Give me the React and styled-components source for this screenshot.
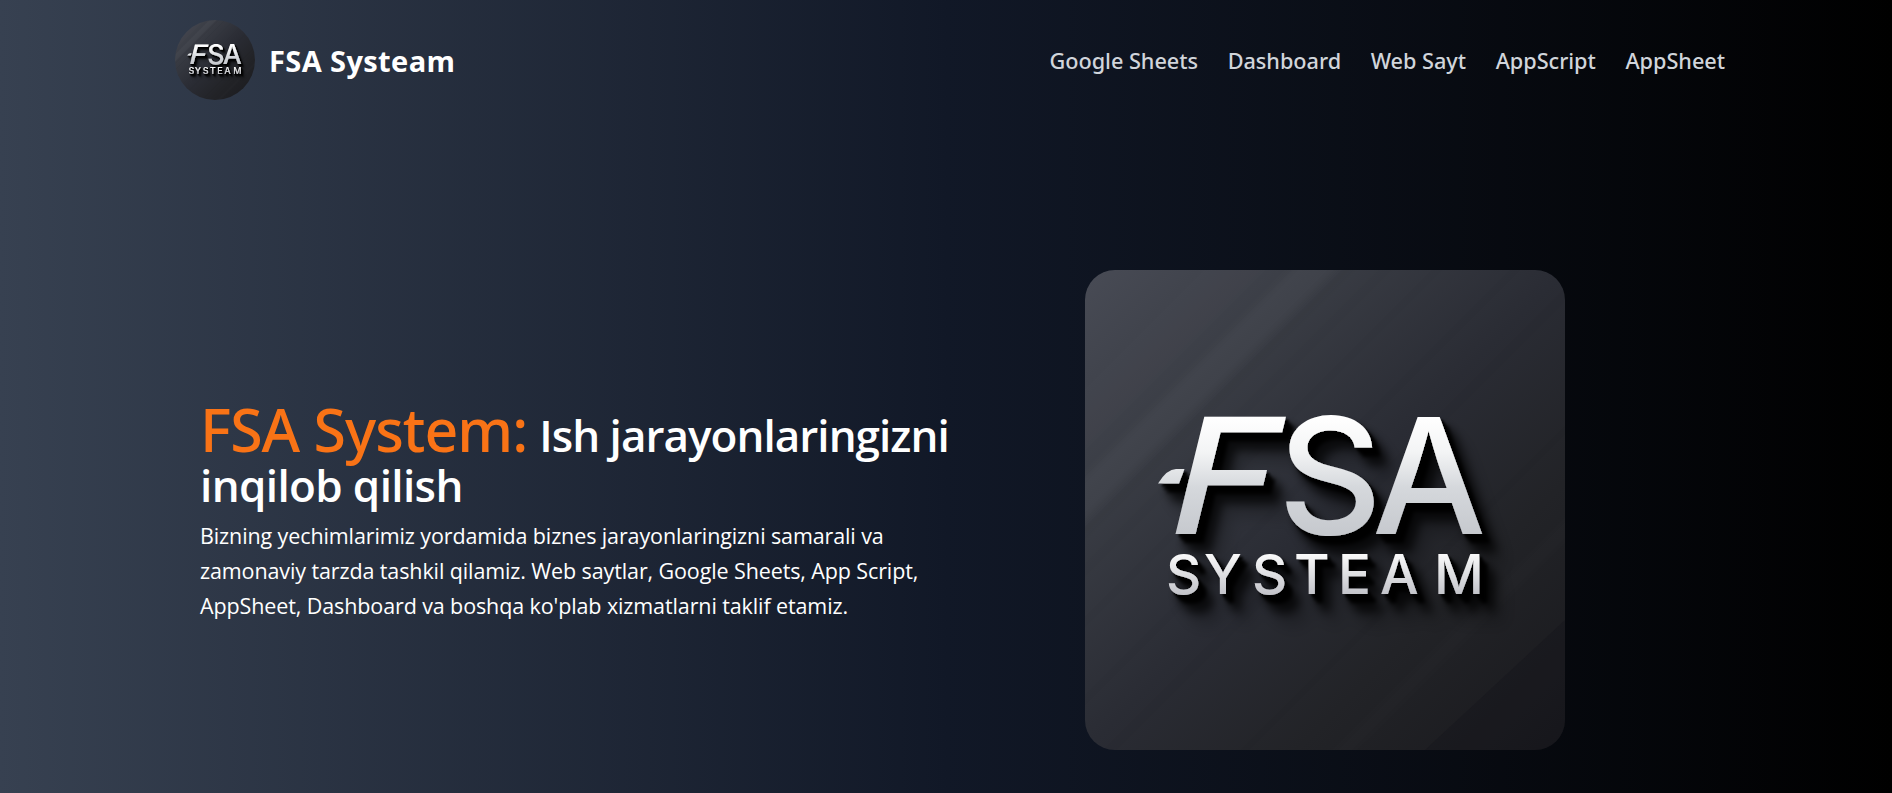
import React from 'react';
import styled, { createGlobalStyle } from 'styled-components';

const GlobalStyle = createGlobalStyle`
  *, *::before, *::after { box-sizing: border-box; }
  body { margin: 0; background: #000; }
`;

const Page = styled.div`
  min-height: 793px;
  height: 100vh;
  overflow: hidden;
  color: #fff;
  background: linear-gradient(to right, #374151, #111827, #000);
  font-family: 'Open Sans', 'Noto Sans', sans-serif;
`;

const Header = styled.header`
  height: 120px;
  padding: 0 167px 0 175px;
  display: flex;
  align-items: center;
  justify-content: space-between;
`;

const Brand = styled.a`
  display: flex;
  align-items: center;
  gap: 14px;
  color: #fff;
  font-size: 29px;
  font-weight: 700;
  letter-spacing: 0.4px;
  line-height: 40px;
`;

const BrandName = styled.span`
  padding-top: 2px;
`;

const Nav = styled.nav`
  display: flex;
  gap: 29.6px;
  padding-top: 2px;
`;

const NavLink = styled.a`
  color: #d1d5db;
  font: 500 21.7px/32px 'Noto Sans', sans-serif;
  letter-spacing: -0.03px;
`;

const Hero = styled.main`
  display: flex;
  align-items: center;
  padding: 150px 0 0 200px;
`;

const Copy = styled.section`
  width: 885px;
  padding-top: 6px;
`;

const Title = styled.h1`
  margin: 0 0 8px;
  font-size: 44px;
  font-weight: 600;
  line-height: 50px;
`;

const TitleLine = styled.span`
  display: flex;
  align-items: baseline;
  gap: 12px;
  white-space: nowrap;
  letter-spacing: ${({ $tracking }) => $tracking}px;
`;

const Accent = styled.span`
  color: #f97316;
  font: 500 59px/50px 'Noto Sans', sans-serif;
  letter-spacing: -1px;
`;

const Lead = styled.p`
  margin: 0;
  font-size: 21.5px;
  line-height: 35px;
  letter-spacing: -0.11px;
`;

const LeadLine = styled.span`
  display: block;
  white-space: nowrap;
`;

const LogoFrame = styled.svg`
  display: block;
  flex: none;
  width: ${({ $size }) => $size}px;
  height: ${({ $size }) => $size}px;
  border-radius: ${({ $radius }) => $radius};
`;

const Mark = styled.text`
  font: 500 161px Inter, sans-serif;
`;

const Caption = styled.text`
  font: 500 54.4px Inter, sans-serif;
`;

const streaks = [
  [150, 40, '#fff', 0.008],
  [228, 30, '#fff', 0.03],
  [262, 8, '#000', 0.03],
  [300, 6, '#000', 0.03],
  [352, 5, '#000', 0.03],
  [430, 5, '#000', 0.03],
  [505, 8, '#000', 0.03],
  [640, 6, '#000', 0.03],
  [740, 14, '#fff', 0.006],
];

function Logo({ id, size, radius }) {
  const ref = (name) => `url(#${id}-${name})`;
  return (
    <LogoFrame $size={size} $radius={radius} viewBox="0 0 480 480" role="img">
      <defs>
        <linearGradient id={`${id}-plate`} x1="0" y1="0" x2="1" y2="1">
          <stop offset="0" stopColor="#484b55" />
          <stop offset="0.24" stopColor="#3a3d45" />
          <stop offset="0.5" stopColor="#2a2c34" />
          <stop offset="0.72" stopColor="#222327" />
          <stop offset="1" stopColor="#19191d" />
        </linearGradient>
        <linearGradient id={`${id}-metal`} gradientUnits="userSpaceOnUse" x1="0" y1="147" x2="0" y2="265">
          <stop offset="0" stopColor="#fff" />
          <stop offset="0.3" stopColor="#f3f4f5" />
          <stop offset="0.6" stopColor="#d5d8dc" />
          <stop offset="1" stopColor="#c6c9ce" />
        </linearGradient>
        <linearGradient id={`${id}-letter`} gradientUnits="userSpaceOnUse" x1="0" y1="-117" x2="0" y2="0">
          <stop offset="0" stopColor="#fff" />
          <stop offset="0.3" stopColor="#f3f4f5" />
          <stop offset="0.6" stopColor="#d5d8dc" />
          <stop offset="1" stopColor="#c6c9ce" />
        </linearGradient>
        <linearGradient id={`${id}-caption`} gradientUnits="userSpaceOnUse" x1="0" y1="284" x2="0" y2="324">
          <stop offset="0" stopColor="#fafafa" />
          <stop offset="1" stopColor="#c3c4ca" />
        </linearGradient>
        <filter id={`${id}-soft`} filterUnits="userSpaceOnUse" x="0" y="0" width="480" height="480">
          <feGaussianBlur stdDeviation="3" />
        </filter>
        <filter id={`${id}-shade`} filterUnits="userSpaceOnUse" x="40" y="110" width="430" height="310">
          <feDropShadow dx="3" dy="3" stdDeviation="0.8" floodColor="#000" floodOpacity="1" />
          <feDropShadow dx="5" dy="6" stdDeviation="1.8" floodColor="#000" floodOpacity="1" />
          <feDropShadow dx="7" dy="9" stdDeviation="4" floodColor="#000" floodOpacity="0.7" />
          <feDropShadow dx="9" dy="13" stdDeviation="7" floodColor="#000" floodOpacity="0.3" />
        </filter>
      </defs>
      <rect width="480" height="480" fill={ref('plate')} />
      <g filter={ref('soft')}>
        {streaks.map(([at, width, colour, opacity]) => (
          <path
            key={at}
            d={`M${at + 20} -20L${at - 500} 500`}
            stroke={colour}
            strokeOpacity={opacity}
            strokeWidth={width}
          />
        ))}
      </g>
      <path d="M480 350V480H340Z" fill="#101016" fillOpacity="0.25" />
      <g filter={ref('shade')}>
        <path d="M73 213.500Q82 199 91 199H99.500L94 213.500Z" fill={ref('metal')} />
        <g fill={ref('letter')}>
          <Mark transform="translate(76 264) skewX(-13.8) scale(1.12 1)">F</Mark>
          <Mark transform="translate(193 264)">S</Mark>
          <Mark transform="translate(287 264)">A</Mark>
        </g>
        <Caption y="323.500" x="81 119 167 209 253 295 349" fill={ref('caption')}>SYSTEAM</Caption>
      </g>
    </LogoFrame>
  );
}

const links = ['Google Sheets', 'Dashboard', 'Web Sayt', 'AppScript', 'AppSheet'];

export default function App() {
  return (
    <>
      <GlobalStyle />
      <Page>
        <Header>
          <Brand>
            <Logo id="brand" size={80} radius="50%" />
            <BrandName>FSA Systeam</BrandName>
          </Brand>
          <Nav>
            {links.map((label) => (
              <NavLink key={label}>{label}</NavLink>
            ))}
          </Nav>
        </Header>
        <Hero>
          <Copy>
            <Title>
              <TitleLine $tracking={-0.97}>
                <Accent>FSA System:</Accent>
                <span>Ish jarayonlaringizni</span>
              </TitleLine>
              <TitleLine $tracking={-0.62}>inqilob qilish</TitleLine>
            </Title>
            <Lead>
              <LeadLine>Bizning yechimlarimiz yordamida biznes jarayonlaringizni samarali va</LeadLine>
              <LeadLine>zamonaviy tarzda tashkil qilamiz. Web saytlar, Google Sheets, App Script,</LeadLine>
              <LeadLine>AppSheet, Dashboard va boshqa ko'plab xizmatlarni taklif etamiz.</LeadLine>
            </Lead>
          </Copy>
          <Logo id="hero" size={480} radius="30px" />
        </Hero>
      </Page>
    </>
  );
}
